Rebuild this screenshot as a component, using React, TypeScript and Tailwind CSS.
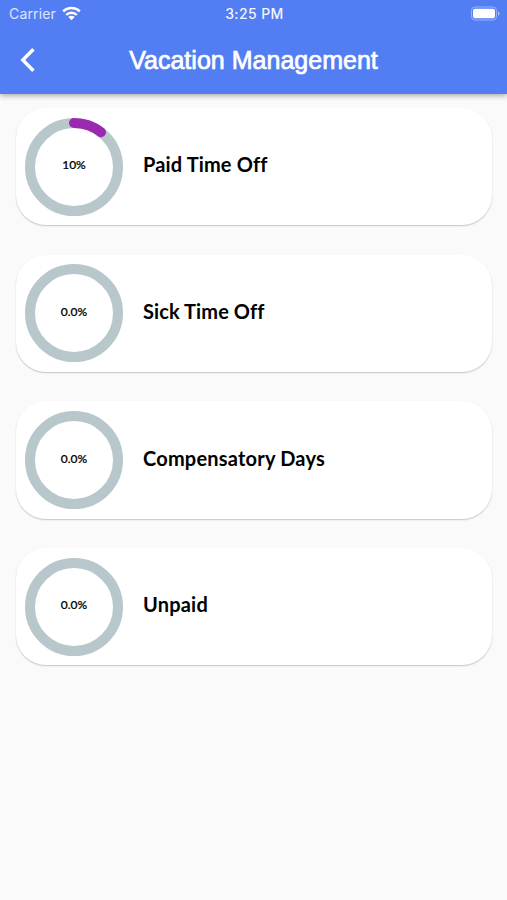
import React from "react";

interface Vacation {
  label: string;
  percent: number;
  display: string;
  labelClass: string;
}

const vacations: Vacation[] = [
  { label: "Paid Time Off", percent: 10.5, display: "10%", labelClass: "tracking-[0.15px]" },
  { label: "Sick Time Off", percent: 0, display: "0.0%", labelClass: "tracking-[0.1px]" },
  { label: "Compensatory Days", percent: 0, display: "0.0%", labelClass: "tracking-[0.2px]" },
  { label: "Unpaid", percent: 0, display: "0.0%", labelClass: "tracking-[0.2px]" },
];

const RADIUS = 44;
const CIRCUMFERENCE = 2 * Math.PI * RADIUS;

const StatusBar = () => (
  <div className="grid h-7 grid-cols-3 items-center pl-[9px] pr-[7px] font-['Inter',sans-serif] text-[14px] leading-none">
    <div className="flex items-center gap-[6px]">
      <span className="tracking-[0.15px] text-white/80">Carrier</span>
      <svg width="19" height="15" viewBox="0 0 19 15" className="-mt-[2px]">
        <g fill="none" stroke="white" strokeWidth="2.5">
          <path d="M1.2 5.4a11.8 11.8 0 0 1 16.6 0" />
          <path d="M4.2 8.8a7.6 7.6 0 0 1 10.6 0" />
        </g>
        <path d="M9.5 14.2 6.3 11a4.5 4.5 0 0 1 6.4 0Z" fill="white" />
      </svg>
    </div>
    <span className="text-center font-medium tracking-[0.4px] text-white/95">3:25 PM</span>
    <svg width="30" height="15" viewBox="0 0 30 15" className="-mt-[2px] justify-self-end">
      <rect x="1.5" y="1" width="25" height="13" rx="3.5" fill="none" stroke="white" strokeOpacity="0.4" />
      <rect x="3" y="2.7" width="22" height="9.6" rx="2" fill="white" />
      <path d="M28 5.2v4.6a2.5 2.5 0 0 0 0-4.6Z" fill="white" fillOpacity="0.5" />
    </svg>
  </div>
);

const Header = () => (
  <header className="relative z-10 h-[94px] bg-[#537ef3] text-white shadow-[0_1px_6px_rgba(0,0,0,0.4)]">
    <StatusBar />
    <div className="grid h-[66px] grid-cols-[60px_1fr_60px] items-center">
      <button type="button" aria-label="Back" className="ml-[20px] -mt-[3px] w-4">
        <svg width="16" height="26" viewBox="0 0 16 26">
          <path d="M13.4 2.2 2.8 13l10.6 10.8" fill="none" stroke="white" strokeWidth="3.4" />
        </svg>
      </button>
      <h1 className="pb-[2px] text-center font-['Liberation_Sans',sans-serif] text-[25px] leading-none tracking-[0.02px] [-webkit-text-stroke:0.7px_white]">
        Vacation Management
      </h1>
    </div>
  </header>
);

const ProgressRing = ({ percent, display }: { percent: number; display: string }) => (
  <div className="grid size-[98px] shrink-0 place-items-center">
    <svg viewBox="0 0 98 98" className="col-start-1 row-start-1 size-full" fill="none">
      <circle cx="49" cy="49" r={RADIUS} stroke="#b8c7cb" strokeWidth="10" />
      {percent > 0 && (
        <circle
          cx="49"
          cy="49"
          r={RADIUS}
          stroke="#9c27b0"
          strokeWidth="10"
          strokeLinecap="round"
          strokeDasharray={`${(percent / 100) * CIRCUMFERENCE} ${CIRCUMFERENCE}`}
          transform="rotate(-90 49 49)"
        />
      )}
    </svg>
    <span className="col-start-1 row-start-1 pb-[3px] text-[12px] leading-none font-medium [-webkit-text-stroke:0.2px_black]">
      {display}
    </span>
  </div>
);

const VacationCard = ({ vacation }: { vacation: Vacation }) => (
  <div className="flex h-[117.3px] items-center gap-[20px] rounded-[30px] bg-white pl-[9px] shadow-[0_1px_1.5px_rgba(0,0,0,0.22)]">
    <ProgressRing percent={vacation.percent} display={vacation.display} />
    <h2 className={`pb-[5px] text-[20px] leading-none font-bold whitespace-nowrap ${vacation.labelClass}`}>
      {vacation.label}
    </h2>
  </div>
);

export default function App() {
  return (
    <div className="min-h-screen bg-[#fafafa] font-['Lato',sans-serif] text-black">
      <Header />
      <main className="flex flex-col gap-[29.4px] pr-[15px] pl-[16px] pt-[14px]">
        {vacations.map((vacation) => (
          <VacationCard key={vacation.label} vacation={vacation} />
        ))}
      </main>
    </div>
  );
}
